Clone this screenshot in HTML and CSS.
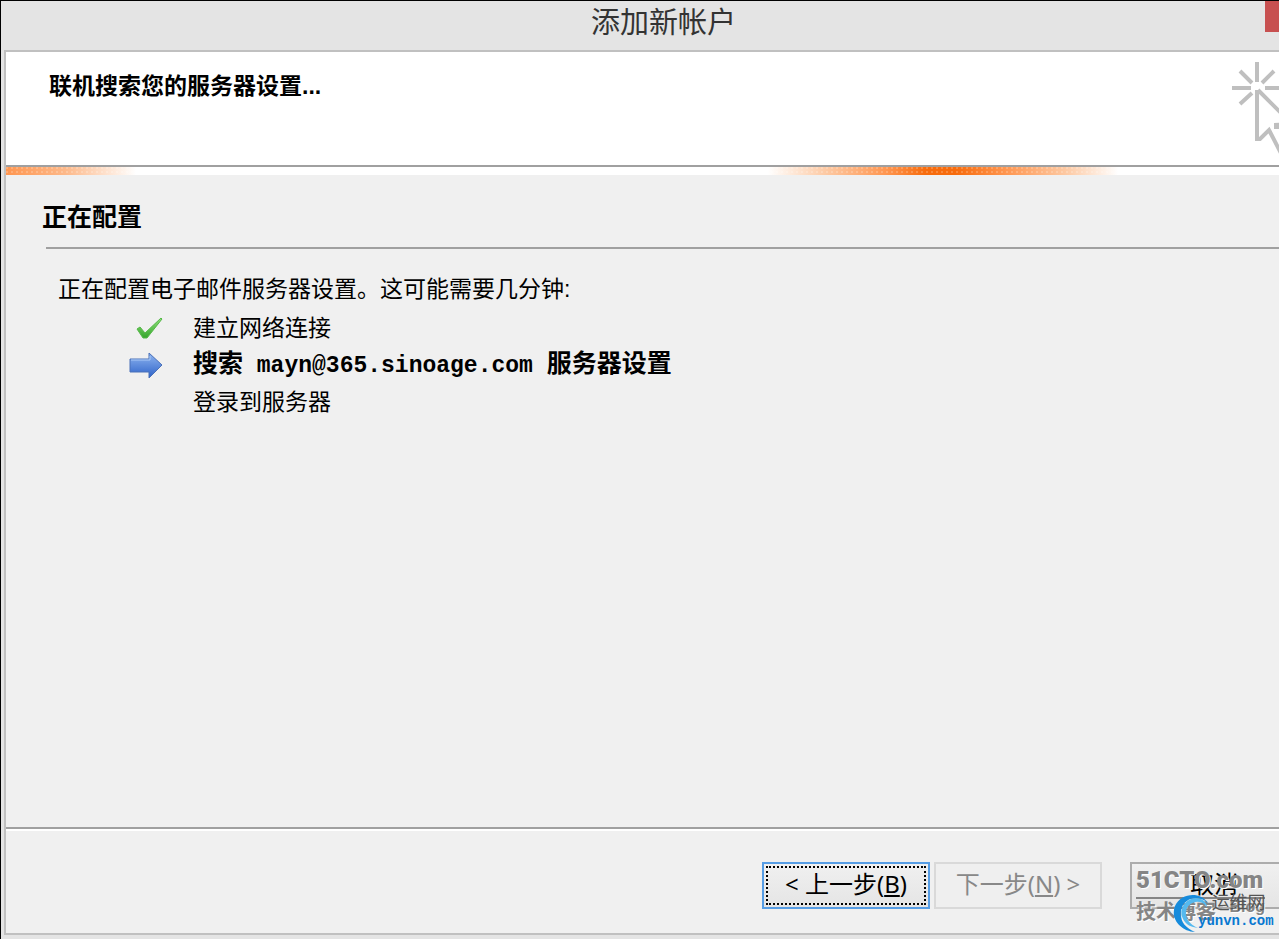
FILE: index.html
```
<!DOCTYPE html>
<html lang="zh-CN">
<head>
    <meta charset="utf-8">
    <title>添加新帐户</title>
    <link rel="stylesheet" href="styles.css">
</head>
<body>
    <div class="window">
        <div class="title-bar">
            <span class="title">添加新帐户</span>
            <button class="close-button" aria-label="关闭"></button>
        </div>

        <div class="dialog">
            <header class="header">
                <h1>联机搜索您的服务器设置...</h1>
                <svg class="click-icon" width="89" height="100" viewBox="0 0 89 100" fill="none" stroke="#bfbfbf" stroke-width="4">
                    <path d="M25 0V20M0 26H19M33 26H52M8 9L20 21M42 9L30 21M8 42L20 31"/>
                    <path d="M25 28V77H28L37 68L52 97L62 91L48 65H44V63L60 62L26 28"/>
                </svg>
            </header>
            <div class="progress-strip"></div>

            <main class="content">
                <h2>正在配置</h2>
                <hr>
                <p class="intro">正在配置电子邮件服务器设置。这可能需要几分钟:</p>
                <ul class="steps">
                    <li>
                        <span class="step-icon">
                            <svg width="34" height="28" viewBox="0 0 34 28">
                                <defs>
                                    <linearGradient id="green" x1="0" y1="0" x2="0" y2="1">
                                        <stop offset="0" stop-color="#8fe07a"/>
                                        <stop offset="1" stop-color="#35a52c"/>
                                    </linearGradient>
                                </defs>
                                <path d="M8 15L11 13L16 19L32 4L33 5L18 24H14Z" fill="url(#green)" stroke="#55b848"/>
                            </svg>
                        </span>
                        <span>建立网络连接</span>
                    </li>
                    <li class="current">
                        <span class="step-icon">
                            <svg width="34" height="28" viewBox="0 0 34 28">
                                <defs>
                                    <linearGradient id="blue" x1="0" y1="0" x2="0" y2="1">
                                        <stop offset="0" stop-color="#8fb5f0"/>
                                        <stop offset="1" stop-color="#2d62c8"/>
                                    </linearGradient>
                                </defs>
                                <path d="M1 8H20V2L33 14L20 27V21H1Z" fill="url(#blue)" stroke="#4a70b8"/>
                                <path d="M2 9H21V5" fill="none" stroke="#a9c8f5"/>
                            </svg>
                        </span>
                        <span>搜索<span class="mail"> mayn@365.sinoage.com </span>服务器设置</span>
                    </li>
                    <li>
                        <span class="step-icon"></span>
                        <span>登录到服务器</span>
                    </li>
                </ul>
            </main>

            <footer class="footer">
                <button class="button back">&lt; 上一步(<u>B</u>)</button>
                <button class="button next" disabled>下一步(<u>N</u>) &gt;</button>
                <button class="button cancel">取消</button>
            </footer>
        </div>
    </div>

    <div class="blog-mark">
        <div class="blog-name">51CTO.com</div>
        <div class="blog-sub"><span>技术博客</span><span class="blog-word">Blog</span></div>
    </div>
    <div class="site-mark">
        <svg class="swirl" width="42" height="40" viewBox="0 0 42 40">
            <path d="M35 10C27-2 8 0 2 13C-3 26 8 38 22 39C12 35 6 27 8 17C11 5 25 1 35 10Z" fill="#168bdc"/>
            <path d="M34 14C34 8 26 3 18 6C8 10 7 20 10 26C13 32 18 34 25 35C16 31 12 25 13 18C15 8 28 5 34 14Z" fill="#55b9ef"/>
        </svg>
        <div class="site-text">
            <span class="site-name">运维网</span>
            <span class="site-url">yunvn.com</span>
        </div>
    </div>
</body>
</html>
```
FILE: styles.css
```
* {
    box-sizing: border-box;
}

body {
    margin: 0;
    height: 100vh;
    position: relative;
    overflow: hidden;
    font-family: "Liberation Sans", "Noto Sans CJK SC", sans-serif;
    font-size: 23px;
    color: #000;
}

/* the dialog runs past the right edge of the screen */
.window {
    display: flex;
    flex-direction: column;
    height: 100%;
    margin-right: -48px;
    padding: 0 4px 4px 3px;
    background-color: #e4e4e4;
    border-top: 1px solid #000;
    border-left: 1px solid #000;
}

.title-bar {
    display: grid;
    grid-template-columns: 58px 1fr 58px;
    height: 49px;
    line-height: 38px;
    text-align: center;
}

.title {
    grid-column: 2;
    font-family: "Noto Sans CJK SC", sans-serif;
    font-size: 29px;
    color: #333;
}

.close-button {
    height: 31px;
    padding: 0;
    border: none;
    background-color: #c75050;
}

.dialog {
    display: flex;
    flex-direction: column;
    flex: 1;
    background-color: #f0f0f0;
    border: 2px solid #c0c0c0;
}

.header {
    display: flex;
    justify-content: space-between;
    height: 115px;
    padding: 10px 0 0 43px;
    background-color: #fff;
    border-bottom: 2px solid #a0a0a0;
}

.header h1 {
    margin: 0;
    padding-top: 6px;
    font-size: 23px;
    line-height: 36px;
}

.click-icon {
    flex: none;
}

.progress-strip {
    height: 8px;
    background:
        radial-gradient(circle at 1px 1px, rgba(255, 255, 255, 0.2) 1px, transparent 1px) 0 0 / 5px 4px,
        linear-gradient(to right, #ff9650, #fdb98a 60px, #fff 130px, #fff 762px, #fdc9a3 820px, #ff9650 880px, #f76b0c 920px, #f76b0c 950px, #ff9650 1000px, #fdc9a3 1060px, #fff 1112px);
}

.content {
    flex: 1;
    padding: 24px 0 0 36px;
}

.content h2 {
    margin: 0;
    font-size: 25px;
    line-height: 36px;
}

.content hr {
    margin: 12px 0 0 4px;
    border: none;
    border-top: 2px solid #a0a0a0;
}

.intro {
    margin: 22px 0 2px 16px;
    line-height: 36px;
}

.steps {
    margin: 0;
    padding: 0 0 0 87px;
    list-style: none;
}

.steps li {
    display: flex;
    align-items: center;
    height: 37px;
    line-height: 36px;
}

.step-icon {
    display: flex;
    width: 34px;
    margin-right: 30px;
}

.steps .current {
    font-size: 25px;
    font-weight: bold;
}

.mail {
    font-family: "Liberation Mono", monospace;
    font-size: 23px;
    white-space: pre;
}

.footer {
    display: flex;
    justify-content: flex-end;
    gap: 4px;
    height: 106px;
    padding: 33px 23px 0 0;
    border-top: 2px solid #a0a0a0;
    box-shadow: inset 0 2px #fff;
}

.button {
    width: 168px;
    height: 47px;
    padding: 0 0 4px;
    font-family: "Noto Sans", "Noto Sans CJK SC", sans-serif;
    font-size: 24px;
    line-height: 36px;
    color: #000;
    background: linear-gradient(#f0f0f0, #e5e5e5);
    border: 2px solid #acacac;
}

.back {
    border-color: #569de5;
    outline: 2px dotted #000;
    outline-offset: -6px;
}

.next {
    color: #888;
    background: #efefef;
    border-color: #d9d9d9;
}

.cancel {
    margin-left: 24px;
}

/* watermarks over the corner */
.blog-mark {
    position: absolute;
    right: 14px;
    bottom: 14px;
    width: 129px;
    color: #858585;
    text-shadow: 1px 1px #fff;
}

.blog-name {
    font-family: "Roboto", sans-serif;
    font-size: 24px;
    font-weight: 900;
    line-height: 34px;
    border-bottom: 2px solid #858585;
}

.blog-sub {
    display: flex;
    justify-content: space-between;
    font-size: 20px;
    font-weight: bold;
    line-height: 26px;
}

.blog-word {
    font-size: 16px;
    line-height: 16px;
}

.site-mark {
    position: absolute;
    right: 5px;
    bottom: 6px;
    display: flex;
    width: 101px;
}

.swirl {
    flex: none;
}

.site-text {
    display: flex;
    flex-direction: column;
    align-items: flex-end;
    margin-left: -17px;
}

.site-name {
    padding-right: 8px;
    font-size: 18px;
    line-height: 20px;
    color: #555;
}

.site-url {
    font-family: "Liberation Mono", monospace;
    font-size: 14px;
    font-weight: bold;
    line-height: 16px;
    color: #0878d0;
}
```
